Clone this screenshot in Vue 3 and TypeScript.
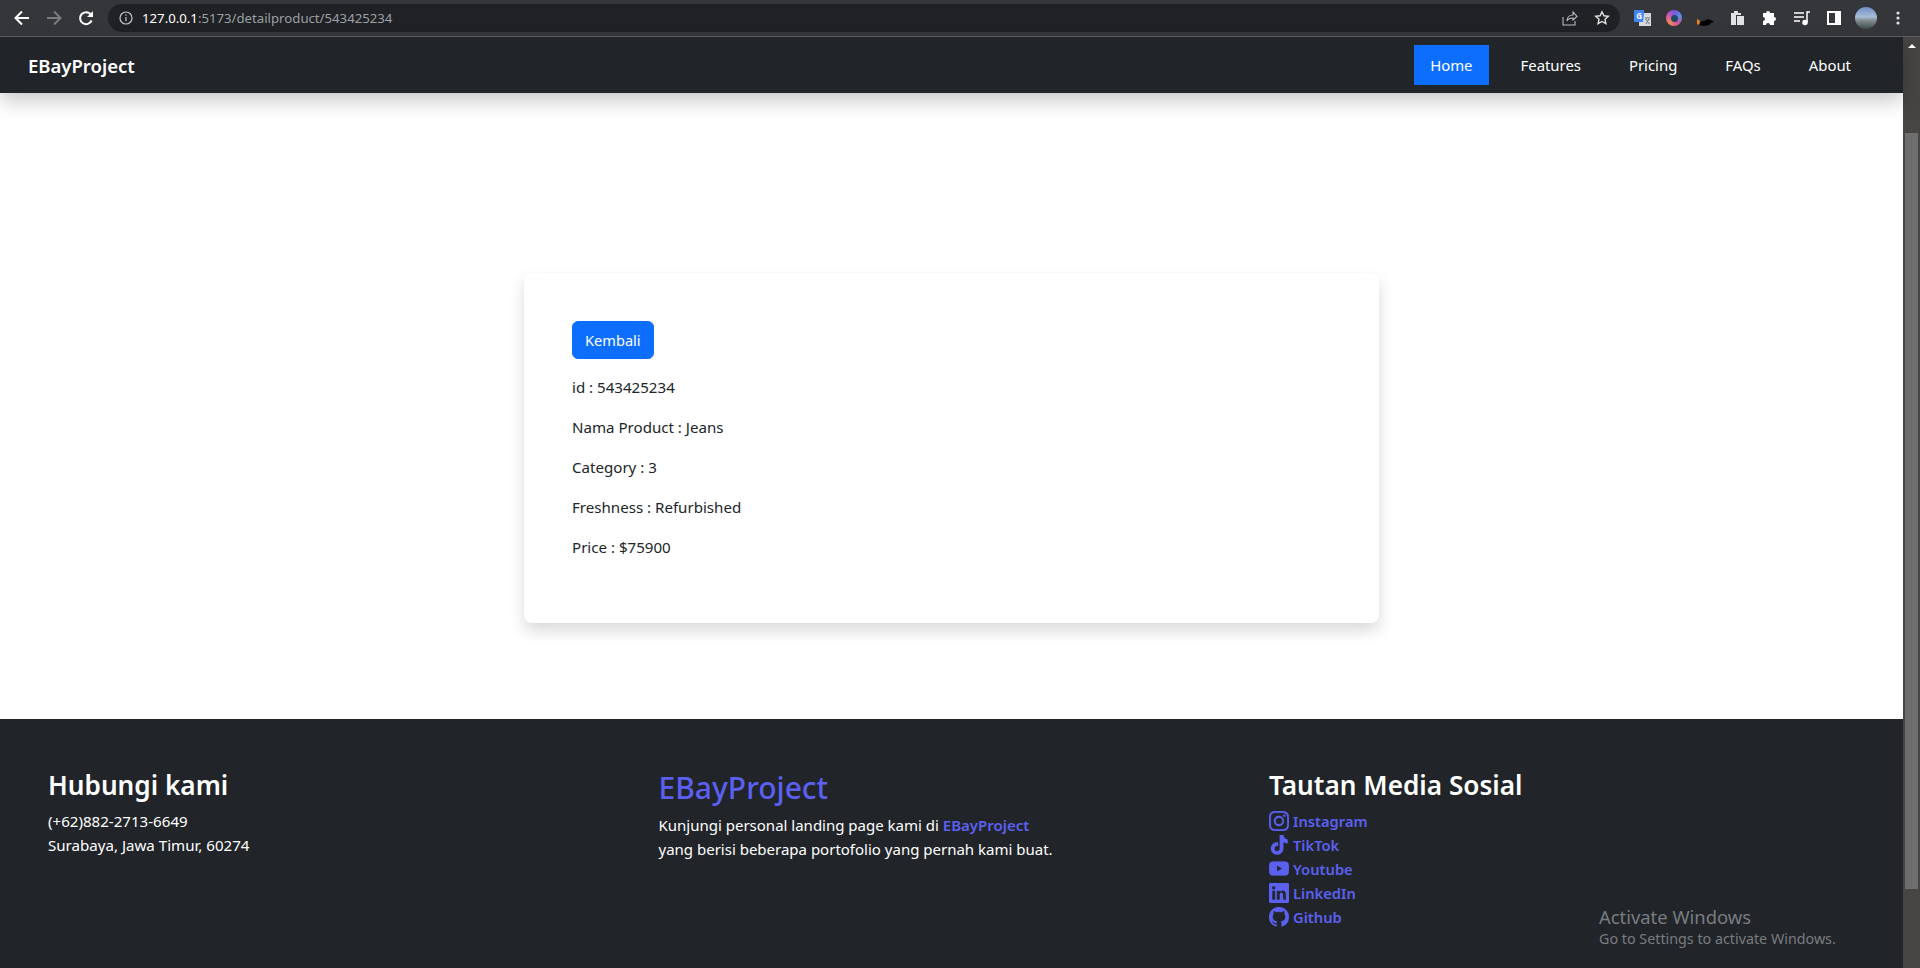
<template>
  <div class="window">
    <!-- browser toolbar -->
    <div class="chrome">
      <div class="chrome-nav">
        <svg class="chrome-icon" width="16" height="16" viewBox="0 0 16 16" fill="none" stroke="#fff" stroke-width="2">
          <path d="M15 8H2M8 1.5 1.5 8 8 14.5" />
        </svg>
        <svg class="chrome-icon" width="16" height="16" viewBox="0 0 16 16" fill="none" stroke="#7b7c7e" stroke-width="2">
          <path d="M1 8h13M8 1.5 14.5 8 8 14.5" />
        </svg>
        <svg class="chrome-icon" width="16" height="16" viewBox="0 0 16 16" fill="none" stroke="#fff" stroke-width="2">
          <path d="M13.6 10.5A6 6 0 1 1 12.6 4.2L14.5 6" />
          <path d="M15 1v6H9" fill="#fff" stroke="none" />
        </svg>
      </div>
      <div class="omnibox">
        <svg width="14" height="14" viewBox="0 0 14 14" fill="none" stroke="#c4c7c9" stroke-width="1.2">
          <circle cx="7" cy="7" r="6" />
          <path d="M7 6v4.2M7 3.4v1.3" />
        </svg>
        <span class="url"><b>127.0.0.1</b>:5173/detailproduct/543425234</span>
        <div class="omni-actions">
          <svg width="16" height="16" viewBox="0 0 16 16" fill="none" stroke="#b9bbbd" stroke-width="1.1">
            <path d="M1 7v8h12v-4M5 11c0-4 3-6 6-6V2l4 4.5L11 10V8c-3 0-5 1-6 3z" />
          </svg>
          <svg width="16" height="16" viewBox="0 0 16 16" fill="none" stroke="#e3e3e4" stroke-width="1.4">
            <path d="m8 1.8 1.9 4 4.4.5-3.3 3 .9 4.4L8 11.5l-3.9 2.2.9-4.4-3.3-3 4.4-.5z" />
          </svg>
        </div>
      </div>
      <div class="extensions">
        <svg width="17" height="17" viewBox="0 0 17 17">
          <rect x="5" y="3" width="12" height="13" fill="#d5d8dd" />
          <path d="M1 0h9v3l-1 9H1a1 1 0 0 1-1-1V1a1 1 0 0 1 1-1z" fill="#4285f4" />
          <text x="2.2" y="8.6" class="ext-g">G</text>
          <path d="M11 8h5M12 14l3-5M11.5 9l4 5" stroke="#6b6f76" stroke-width="1" />
        </svg>
        <div class="lens"><span /></div>
        <svg width="18" height="17" viewBox="0 0 18 17">
          <path d="M2 15c0-3 3-4 7-5l2-1 3 1 3 2-3 1-2 2-5 1z" fill="#000" />
          <path d="M0 9l3 2-1 4-2-1z" fill="#f0851e" />
        </svg>
        <svg width="16" height="16" viewBox="0 0 16 16" fill="#dfe1e3">
          <path d="M1 3h3V1h4v2h3v2H6v10H1z" />
          <rect x="7" y="6" width="7" height="9" />
        </svg>
        <svg width="16" height="16" viewBox="0 0 16 16" fill="#fff">
          <path d="M6 1a2 2 0 0 1 2 2h4v4a2 2 0 1 1 0 4v4H8a2 2 0 1 0-4 0H1v-4a2 2 0 1 0 0-4V3h3a2 2 0 0 1 2-2z" />
        </svg>
        <svg width="17" height="16" viewBox="0 0 17 16" fill="none" stroke="#fff" stroke-width="1.5">
          <path d="M0 3h10M0 7h10M0 11h6M13 12V2h3" />
          <circle cx="11" cy="12.5" r="2" fill="#fff" />
        </svg>
        <svg width="14" height="14" viewBox="0 0 14 14">
          <path fill="#fff" fill-rule="evenodd" d="M0 0h14v14H0zM2 2v10h6V2z" />
        </svg>
        <div class="avatar" />
        <svg width="4" height="14" viewBox="0 0 4 14" fill="#dfe1e3">
          <circle cx="2" cy="2" r="1.6" />
          <circle cx="2" cy="7" r="1.6" />
          <circle cx="2" cy="12" r="1.6" />
        </svg>
      </div>
    </div>

    <div class="viewport">
      <div class="page">
        <nav class="navbar">
          <a class="brand">EBayProject</a>
          <ul class="nav-links">
            <li v-for="link in navLinks" :key="link" :class="{ active: link === 'Home' }">{{ link }}</li>
          </ul>
        </nav>

        <main class="content">
          <section class="card">
            <button class="back-btn" type="button">Kembali</button>
            <p v-for="row in details" :key="row">{{ row }}</p>
          </section>
        </main>

        <footer class="footer">
          <div class="col">
            <h3>Hubungi kami</h3>
            <div class="lines">
              <span>(+62)882-2713-6649</span>
              <span>Surabaya, Jawa Timur, 60274</span>
            </div>
          </div>
          <div class="col">
            <h3 class="accent-title">EBayProject</h3>
            <div class="lines about">
              <span>Kunjungi personal landing page kami di <a class="accent">EBayProject</a></span>
              <span>yang berisi beberapa portofolio yang pernah kami buat.</span>
            </div>
          </div>
          <div class="col">
            <h3>Tautan Media Sosial</h3>
            <div class="socials">
              <a class="social">
                <svg width="20" height="20" viewBox="0 0 16 16" fill="currentColor">
                  <path d="M8 0C5.829 0 5.556.01 4.703.048 3.85.088 3.269.222 2.76.42a3.917 3.917 0 0 0-1.417.923A3.927 3.927 0 0 0 .42 2.76C.222 3.268.087 3.85.048 4.7.01 5.555 0 5.827 0 8.001c0 2.172.01 2.444.048 3.297.04.852.174 1.433.372 1.942.205.526.478.972.923 1.417.444.445.89.719 1.416.923.51.198 1.09.333 1.942.372C5.555 15.99 5.827 16 8 16s2.444-.01 3.298-.048c.851-.04 1.434-.174 1.943-.372a3.916 3.916 0 0 0 1.416-.923c.445-.445.718-.891.923-1.417.197-.509.332-1.09.372-1.942C15.99 10.445 16 10.173 16 8s-.01-2.445-.048-3.299c-.04-.851-.175-1.433-.372-1.941a3.926 3.926 0 0 0-.923-1.417A3.911 3.911 0 0 0 13.24.42c-.51-.198-1.092-.333-1.943-.372C10.443.01 10.172 0 7.998 0h.003zm-.717 1.442h.718c2.136 0 2.389.007 3.232.046.78.035 1.204.166 1.486.275.373.145.64.319.92.599.28.28.453.546.598.92.11.281.24.705.275 1.485.039.843.047 1.096.047 3.231s-.008 2.389-.047 3.232c-.035.78-.166 1.203-.275 1.485a2.47 2.47 0 0 1-.599.919c-.28.28-.546.453-.92.598-.28.11-.704.24-1.485.276-.843.038-1.096.047-3.232.047s-2.39-.009-3.233-.047c-.78-.036-1.203-.166-1.485-.276a2.478 2.478 0 0 1-.92-.598 2.48 2.48 0 0 1-.6-.92c-.109-.281-.24-.705-.275-1.485-.038-.843-.046-1.096-.046-3.233 0-2.136.008-2.388.046-3.231.036-.78.166-1.204.276-1.486.145-.373.319-.64.599-.92.28-.28.546-.453.92-.598.282-.11.705-.24 1.485-.276.738-.034 1.024-.044 2.515-.045v.002zm4.988 1.328a.96.96 0 1 0 0 1.92.96.96 0 0 0 0-1.92zm-4.27 1.122a4.109 4.109 0 1 0 0 8.217 4.109 4.109 0 0 0 0-8.217zm0 1.441a2.667 2.667 0 1 1 0 5.334 2.667 2.667 0 0 1 0-5.334z" />
                </svg>
                Instagram
              </a>
              <a class="social">
                <svg width="20" height="20" viewBox="0 0 16 16" fill="currentColor">
                  <path d="M8.6 0h2.9c.2 1.9 1.6 3.4 3.5 3.7v2.9c-1.3 0-2.5-.4-3.5-1.1v5.3a5 5 0 1 1-5-5l.7.05v3a2.1 2.1 0 1 0 1.4 2z" />
                </svg>
                TikTok
              </a>
              <a class="social">
                <svg width="20" height="20" viewBox="0 0 16 16" fill="currentColor">
                  <path d="M8.051 1.999h.089c.822.003 4.987.033 6.11.335a2.01 2.01 0 0 1 1.415 1.42c.101.38.172.883.22 1.402l.01.104.022.26.008.104c.065.914.073 1.77.074 1.957v.075c-.001.194-.01 1.108-.082 2.06l-.008.105-.009.104c-.05.572-.124 1.14-.235 1.558a2.007 2.007 0 0 1-1.415 1.42c-1.16.312-5.569.334-6.18.335h-.142c-.309 0-1.587-.006-2.927-.052l-.17-.006-.087-.004-.171-.007-.171-.007c-1.11-.049-2.167-.128-2.654-.26a2.007 2.007 0 0 1-1.415-1.419c-.111-.417-.185-.986-.235-1.558L.09 9.82l-.008-.104A31.4 31.4 0 0 1 0 7.68v-.123c.002-.215.01-.958.064-1.778l.007-.103.003-.052.008-.104.022-.26.01-.104c.048-.519.119-1.023.22-1.402a2.007 2.007 0 0 1 1.415-1.42c.487-.13 1.544-.21 2.654-.26l.17-.007.172-.006.086-.003.171-.007A99.788 99.788 0 0 1 7.858 2h.193zM6.4 5.209v4.818l4.157-2.408L6.4 5.209z" />
                </svg>
                Youtube
              </a>
              <a class="social">
                <svg width="20" height="20" viewBox="0 0 16 16" fill="currentColor">
                  <path d="M0 1.146C0 .513.526 0 1.175 0h13.65C15.474 0 16 .513 16 1.146v13.708c0 .633-.526 1.146-1.175 1.146H1.175C.526 16 0 15.487 0 14.854V1.146zm4.943 12.248V6.169H2.542v7.225h2.401zm-1.2-8.212c.837 0 1.358-.554 1.358-1.248-.015-.709-.52-1.248-1.342-1.248-.822 0-1.359.54-1.359 1.248 0 .694.521 1.248 1.327 1.248h.016zm4.908 8.212V9.359c0-.216.016-.432.08-.586.173-.431.568-.878 1.232-.878.869 0 1.216.662 1.216 1.634v3.865h2.401V9.25c0-2.22-1.184-3.252-2.764-3.252-1.274 0-1.845.7-2.165 1.193v.025h-.016a5.54 5.54 0 0 1 .016-.025V6.169h-2.4c.03.678 0 7.225 0 7.225h2.4z" />
                </svg>
                LinkedIn
              </a>
              <a class="social">
                <svg width="20" height="20" viewBox="0 0 16 16" fill="currentColor">
                  <path d="M8 0C3.58 0 0 3.58 0 8c0 3.54 2.29 6.53 5.47 7.59.4.07.55-.17.55-.38 0-.19-.01-.82-.01-1.49-2.01.37-2.53-.49-2.69-.94-.09-.23-.48-.94-.82-1.13-.28-.15-.68-.52-.01-.53.63-.01 1.08.58 1.23.82.72 1.21 1.87.87 2.33.66.07-.52.28-.87.51-1.07-1.78-.2-3.64-.89-3.64-3.95 0-.87.31-1.59.82-2.15-.08-.2-.36-1.02.08-2.12 0 0 .67-.21 2.2.82.64-.18 1.32-.27 2-.27.68 0 1.36.09 2 .27 1.53-1.04 2.2-.82 2.2-.82.44 1.1.16 1.92.08 2.12.51.56.82 1.27.82 2.15 0 3.07-1.87 3.75-3.65 3.95.29.25.54.73.54 1.48 0 1.07-.01 1.93-.01 2.2 0 .21.15.46.55.38A8.012 8.012 0 0 0 16 8c0-4.42-3.58-8-8-8z" />
                </svg>
                Github
              </a>
            </div>
          </div>
          <div class="activate">
            <span class="activate-title">Activate Windows</span>
            <span>Go to Settings to activate Windows.</span>
          </div>
        </footer>
      </div>

      <!-- fake scrollbar of the screenshot -->
      <div class="scrollbar">
        <span class="arrow" />
        <div class="thumb" />
      </div>
    </div>
  </div>
</template>

<script setup lang="ts">
const navLinks: string[] = ['Home', 'Features', 'Pricing', 'FAQs', 'About']

const details: string[] = [
  'id : 543425234',
  'Nama Product : Jeans',
  'Category : 3',
  'Freshness : Refurbished',
  'Price : $75900',
]
</script>

<style>
html,
body {
  margin: 0;
  overflow: hidden;
  background: #fff;
}
</style>

<style scoped>
.window {
  height: 968px;
  display: flex;
  flex-direction: column;
  font-family: "Noto Sans", "Open Sans", sans-serif;
  font-size: 15.1px;
  color: #212529;
}

.chrome {
  height: 37px;
  flex: none;
  box-sizing: border-box;
  border-bottom: 1px solid #5f6063;
  background: #35363a;
  display: flex;
  align-items: center;
  padding: 0 0 0 14px;
}

.chrome-nav {
  display: flex;
  align-items: center;
  gap: 16px;
}

.omnibox {
  margin-left: 14px;
  width: 1512px;
  height: 28px;
  box-sizing: border-box;
  border-radius: 14px;
  background: #202124;
  display: flex;
  align-items: center;
  padding: 0 10px 0 11px;
  gap: 9px;
}

.url {
  font-size: 13.2px;
  color: #9aa0a6;
}

.url b {
  font-weight: 400;
  color: #fff;
}

.omni-actions {
  margin-left: auto;
  display: flex;
  align-items: center;
  gap: 16px;
}

.extensions {
  margin-left: 6px;
  display: grid;
  grid-auto-flow: column;
  grid-auto-columns: 32px;
  justify-items: center;
  align-items: center;
}

.ext-g {
  font-size: 8px;
  font-weight: 700;
  fill: #fff;
}

.lens {
  width: 16px;
  height: 16px;
  border-radius: 50%;
  background: conic-gradient(#7a55e0, #5f8be6, #d44fa0, #f08a5a, #d75aa5, #7a55e0);
  display: flex;
  align-items: center;
  justify-content: center;
}

.lens span {
  width: 7px;
  height: 7px;
  border-radius: 50%;
  background: #1f4a63;
}

.avatar {
  width: 22px;
  height: 22px;
  border-radius: 50%;
  background: linear-gradient(180deg, #6f8fc4 0%, #a9bcd8 45%, #7f8a8c 62%, #3f4a50 100%);
}

.viewport {
  flex: 1;
  min-height: 0;
  display: flex;
}

.page {
  flex: 1;
  min-width: 0;
  display: flex;
  flex-direction: column;
}

.navbar {
  height: 56px;
  flex: none;
  background: #212529;
  box-shadow: 0 8px 20px rgba(0, 0, 0, 0.22);
  position: relative;
  display: flex;
  align-items: center;
  justify-content: space-between;
  padding: 0 36px 0 28px;
}

.brand {
  font-size: 18.5px;
  font-weight: 600;
  color: #fff;
}

.nav-links {
  list-style: none;
  margin: 0;
  padding: 0;
  display: flex;
  gap: 16px;
  font-size: 14.9px;
}

.nav-links li {
  height: 40px;
  line-height: 40px;
  padding: 0 16px;
  color: #fff;
}

.nav-links li.active {
  background: #0d6efd;
}

.content {
  height: 626px;
  flex: none;
  display: flex;
  justify-content: center;
  align-items: center;
  box-sizing: border-box;
  padding-top: 84px;
}

.card {
  width: 855px;
  height: 350px;
  box-sizing: border-box;
  padding: 48px;
  border-radius: 8px;
  background: #fff;
  box-shadow: 0 8px 16px rgba(0, 0, 0, 0.15);
}

.back-btn {
  display: block;
  height: 38px;
  padding: 0 12px;
  border: 1px solid #0d6efd;
  border-radius: 6px;
  background: #0d6efd;
  color: #fff;
  font-family: inherit;
  font-size: 14.6px;
  margin-bottom: 16px;
}

.card p {
  margin: 0 0 16px;
  line-height: 24px;
}

.footer {
  flex: 1;
  position: relative;
  background: #212529;
  color: #fff;
  display: grid;
  grid-template-columns: repeat(3, 610.5px);
  padding: 49px 0 0 48px;
}

.col h3 {
  margin: 0 0 7px;
  font-size: 26.2px;
  line-height: 34px;
  font-weight: 600;
}

.col .accent-title {
  margin-bottom: 5px;
  font-size: 30px;
  line-height: 40px;
  font-weight: 500;
  color: #5b60f0;
}

.lines {
  display: flex;
  flex-direction: column;
  line-height: 24px;
}

.about {
  font-size: 15px;
}

.accent {
  color: #5b60f0;
  font-weight: 600;
}

.socials {
  display: flex;
  flex-direction: column;
}

.social {
  display: flex;
  align-items: center;
  gap: 4px;
  height: 24px;
  font-size: 14.7px;
  color: #5b60f0;
  font-weight: 600;
}

.social svg {
  flex: none;
  stroke: currentColor;
  stroke-width: 0.2;
}

.activate {
  position: absolute;
  left: 1599px;
  top: 185px;
  display: flex;
  flex-direction: column;
  font-size: 14.3px;
  color: #797c80;
}

.activate-title {
  font-size: 18.4px;
  line-height: 25px;
}

.scrollbar {
  width: 17px;
  flex: none;
  background: #464544;
  display: flex;
  flex-direction: column;
  align-items: center;
}

.thumb {
  width: 13px;
  height: 756px;
  margin-top: 85px;
  background: #6e6e6e;
}

.arrow {
  width: 0;
  height: 0;
  margin-top: 7px;
  border-left: 4px solid transparent;
  border-right: 4px solid transparent;
  border-bottom: 4px solid #fff;
}
</style>
